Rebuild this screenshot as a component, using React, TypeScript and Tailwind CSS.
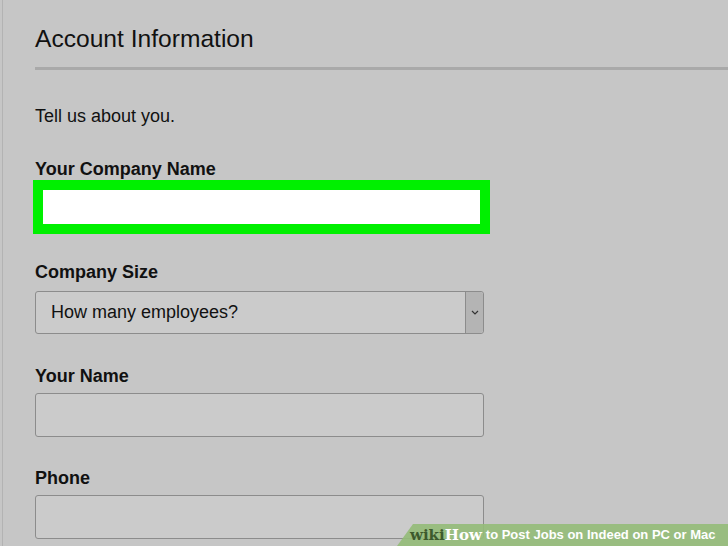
import React from 'react'

const Label: React.FC<{ children: React.ReactNode }> = ({ children }) => (
  <div className="text-[18px] leading-[20px] font-bold text-[#111]">{children}</div>
)

const TextBox: React.FC = () => (
  <div className="w-[449px] h-[44px] mt-[7px] bg-[#cbcbcb] border border-[#8c8c8c] rounded-[3px]" />
)

const App: React.FC = () => {
  return (
    <div
      className="relative w-[728px] h-[546px] overflow-hidden bg-[#c6c6c6]"
      style={{ fontFamily: '"Liberation Sans", Arial, sans-serif' }}
    >
      <div className="ml-[2px] h-full border-l border-[#b3b3b3] pl-[32px] pt-[24px]">
        {/* Header */}
        <h1 className="text-[24.6px] leading-[30px] font-normal text-[#111]">Account Information</h1>
        <div className="mt-[13px] h-[3px] bg-[#a9a9a9]" />

        <p className="mt-[36px] text-[18px] leading-[20px] text-[#111]">Tell us about you.</p>

        {/* Company name - highlighted */}
        <div className="mt-[33px]">
          <Label>Your Company Name</Label>
          <div className="-ml-[2px] mt-[1px] w-[457px] h-[54px] border-[10px] border-[#00f000] bg-white" />
        </div>

        {/* Company size */}
        <div className="mt-[28px]">
          <Label>Company Size</Label>
          <div className="mt-[9px] w-[449px] h-[43px] flex bg-[#cbcbcb] border border-[#8c8c8c] rounded-[3px]">
            <div className="flex-1 flex items-center pl-[15px] text-[18px] text-[#111]">How many employees?</div>
            <div className="w-[18px] flex items-center justify-center bg-[#b4b4b4] border-l border-[#8c8c8c] rounded-r-[3px]">
              <svg width="8" height="5" viewBox="0 0 8 5" fill="none">
                <path d="M1 1l3 3 3-3" stroke="#333" strokeWidth="1.2" />
              </svg>
            </div>
          </div>
        </div>

        {/* Your name */}
        <div className="mt-[32px]">
          <Label>Your Name</Label>
          <TextBox />
        </div>

        {/* Phone */}
        <div className="mt-[31px]">
          <Label>Phone</Label>
          <TextBox />
        </div>
      </div>

      {/* wikiHow banner */}
      <div
        className="absolute right-0 bottom-0 h-[22px] w-[331px] bg-[#94bb78]/90 flex items-center pl-[13px] whitespace-nowrap"
        style={{ clipPath: 'polygon(16px 0, 100% 0, 100% 100%, 0 100%)' }}
      >
        <span className="text-[15px] font-bold text-[#3d5a2c]" style={{ fontFamily: '"DejaVu Serif", serif' }}>wiki</span>
        <span className="text-[15px] font-bold text-white" style={{ fontFamily: '"DejaVu Serif", serif' }}>How</span>
        <span className="ml-[4px] text-[13px] font-bold text-white">to Post Jobs on Indeed on PC or Mac</span>
      </div>
    </div>
  )
}

export default App
